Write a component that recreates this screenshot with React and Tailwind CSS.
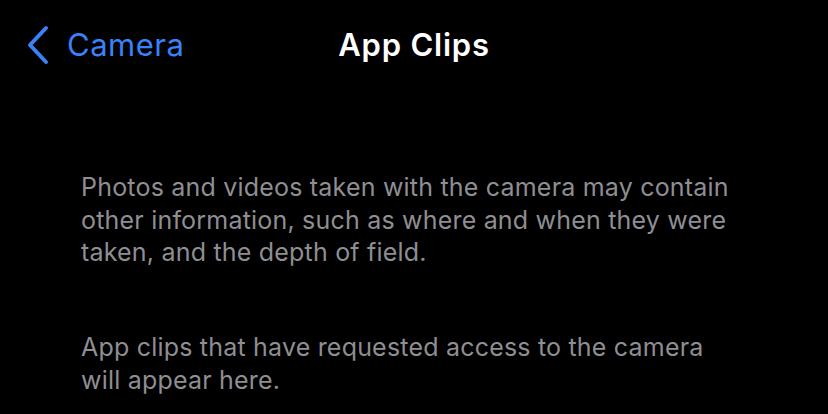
export default function App() {
  return (
    <div className="w-[828px] h-[414px] bg-black overflow-hidden" style={{ fontFamily: 'Inter, "Noto Sans", sans-serif' }}>
      <div className="relative h-[90px] flex items-center">
        <div className="flex items-center pl-[26px]">
          <svg width="26" height="40" viewBox="0 0 26 40">
            <path d="M20 3 L4 20 L20 37" fill="none" stroke="#3a82f7" strokeWidth="4" strokeLinecap="round" strokeLinejoin="round" />
          </svg>
          <span className="ml-[15px] text-[31px] text-[#3a82f7] tracking-[0.5px]">Camera</span>
        </div>
        <div className="absolute left-0 right-0 top-0 h-[90px] flex items-center justify-center pointer-events-none">
          <span className="text-[31px] font-semibold text-white tracking-[0.8px]">App Clips</span>
        </div>
      </div>
      <div className="pl-[81px] pt-[81px] text-[25px] leading-[32.5px] text-[#8e8e93] tracking-[0.2px]">
        <p className="w-[665px]">Photos and videos taken with the camera may contain other information, such as where and when they were taken, and the depth of field.</p>
        <p className="w-[665px] mt-[62.5px]">App clips that have requested access to the camera will appear here.</p>
      </div>
    </div>
  );
}
